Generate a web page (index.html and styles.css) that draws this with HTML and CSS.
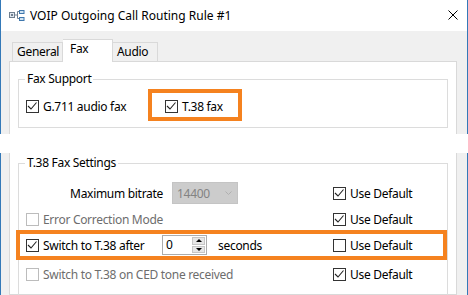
FILE: index.html
```html
<!DOCTYPE html>
<html>
<head>
<meta charset="utf-8">
<title>VOIP Outgoing Call Routing Rule #1</title>
<link rel="stylesheet" href="styles.css">
</head>
<body>
<div class="shot shot-top">
  <div class="titlebar">
    <svg class="app-icon" viewBox="0 0 16 11" width="16" height="11">
      <rect x="0.5" y="2.5" width="5" height="5" fill="#dfe6ee" stroke="#6f7f90"/>
      <rect x="2" y="4" width="2" height="2" fill="#6f7f90"/>
      <path d="M5.5 5H8.5M8.5 1.5V8.5M8.5 1.5H10.5M8.5 8.5H10.5" stroke="#6f7f90" fill="none"/>
      <rect x="10.5" y="0.5" width="4.5" height="3" fill="#cfe3f3" stroke="#3f77ad"/>
      <rect x="10.5" y="7.5" width="4.5" height="3" fill="#cfe3f3" stroke="#3f77ad"/>
    </svg>
    <span class="title">VOIP Outgoing Call Routing Rule #1</span>
    <svg class="close" viewBox="0 0 10 10" width="10" height="10">
      <path d="M0.5 0.5L9.5 9.5M9.5 0.5L0.5 9.5" stroke="#000" stroke-width="1" fill="none"/>
    </svg>
  </div>
  <div class="client">
    <div class="tabs">
      <div class="tab tab-general">General</div>
      <div class="tab tab-fax active">Fax</div>
      <div class="tab tab-audio">Audio</div>
    </div>
    <div class="panel">
      <fieldset class="group group-fax">
        <legend>Fax Support</legend>
        <div class="fax-row">
          <label class="check check-g711"><span class="box"><svg viewBox="0 0 11 11"><path d="M1 5L4 8L9.5 1.5"/></svg></span>G.711 audio fax</label>
          <label class="check"><span class="box"><svg viewBox="0 0 11 11"><path d="M1 5L4 8L9.5 1.5"/></svg></span>T.38 fax</label>
        </div>
      </fieldset>
    </div>
  </div>
  <div class="mark mark-t38"></div>
</div>

<div class="gap"></div>

<div class="shot shot-bottom">
  <div class="client">
    <div class="panel panel-cut">
      <fieldset class="group group-t38">
        <legend>T.38 Fax Settings</legend>
        <div class="settings">
          <div class="cell field">
            <span class="field-label">Maximum bitrate</span>
            <div class="combo"><span>14400</span><svg class="chev" viewBox="0 0 7 4" width="7" height="4"><path d="M0.5 0.5L3.5 3.5L6.5 0.5" stroke="#b0b0b0" fill="none"/></svg></div>
          </div>
          <label class="check"><span class="box"><svg viewBox="0 0 11 11"><path d="M1 5L4 8L9.5 1.5"/></svg></span>Use Default</label>

          <label class="check disabled"><span class="box"></span>Error Correction Mode</label>
          <label class="check"><span class="box"><svg viewBox="0 0 11 11"><path d="M1 5L4 8L9.5 1.5"/></svg></span>Use Default</label>

          <div class="cell field">
            <label class="check check-switch"><span class="box"><svg viewBox="0 0 11 11"><path d="M1 5L4 8L9.5 1.5"/></svg></span>Switch to T.38 after</label>
            <div class="spin">
              <span class="spin-value">0</span>
              <div class="spin-btns">
                <span class="spin-btn"><i class="tri-up"></i></span>
                <span class="spin-btn"><i class="tri-down"></i></span>
              </div>
            </div>
            <span class="unit">seconds</span>
          </div>
          <label class="check"><span class="box"></span>Use Default</label>

          <label class="check disabled"><span class="box"></span>Switch to T.38 on CED tone received</label>
          <label class="check"><span class="box"><svg viewBox="0 0 11 11"><path d="M1 5L4 8L9.5 1.5"/></svg></span>Use Default</label>
        </div>
      </fieldset>
    </div>
  </div>
  <div class="mark mark-switch"></div>
</div>
</body>
</html>
```

FILE: styles.css
```css
* { box-sizing: border-box; }
html, body { margin: 0; padding: 0; }
body {
  width: 468px;
  height: 295px;
  overflow: hidden;
  background: #fff;
  font-family: "Noto Sans", "Segoe UI", sans-serif;
  font-size: 12px;
  color: #000;
}

.shot {
  position: relative;
  overflow: hidden;
  border-left: 1px solid #3479b8;
  border-right: 1px solid #3479b8;
}
.shot-top { height: 134px; }
.shot-bottom { height: 142px; }
.gap { height: 19px; }

/* title bar */
.titlebar {
  height: 31px;
  background: #fff;
  display: flex;
  align-items: center;
  padding-left: 8px;
  padding-bottom: 1px;
}
.app-icon { display: block; margin-right: 5px; }
.title { flex: 1; line-height: 17px; white-space: nowrap; }
.close { display: block; margin-right: 9px; }

/* client area */
.client {
  background: #f0f0f0;
  padding: 8px 10px 0 8px;
  height: calc(100% - 31px);
  letter-spacing: -0.3px;
}
.shot-bottom .client { padding-top: 0; height: 100%; }

.tabs {
  display: flex;
  align-items: flex-end;
  height: 22px;
  padding-left: 3px;
}
.tab {
  height: 19px;
  border: 1px solid #d9d9d9;
  border-bottom: none;
  background: #f0f0f0;
  line-height: 17px;
  white-space: nowrap;
}
.tab + .tab { border-left: none; }
.tab-general { width: 51px; padding-left: 4px; }
.tab-fax { width: 50px; padding-left: 7px; }
.tab-audio { width: 45px; padding-left: 4px; }
.tab.active {
  height: 23px;
  margin-bottom: -1px;
  background: #fff;
  position: relative;
  z-index: 1;
}

.panel {
  background: #fff;
  border: 1px solid #d9d9d9;
  padding: 9px 8px 0 8px;
  height: 100%;
}
.panel-cut { border-top: none; padding-top: 2px; }

/* group boxes */
.group {
  margin: 0;
  min-width: 0;
  border: 1px solid #dcdcdc;
  padding: 0 7px 9px 7px;
}
.group legend {
  padding: 0 2px;
  margin-left: -1px;
  line-height: 16px;
}

.fax-row {
  display: flex;
  align-items: center;
  height: 24px;
  margin-top: 7px;
}
.check-g711 { width: 139px; }

/* checkbox */
.check {
  display: flex;
  align-items: center;
  gap: 4px;
  white-space: nowrap;
  line-height: 17px;
}
.box {
  flex: none;
  width: 13px;
  height: 13px;
  border: 1px solid #333;
  background: #fff;
  display: block;
}
.box svg {
  display: block;
  width: 11px;
  height: 11px;
}
.box svg path {
  fill: none;
  stroke: #222;
  stroke-width: 1.1;
}
.check.disabled { color: #6d6d6d; }
.check.disabled .box { border-color: #bcbcbc; }

/* settings grid */
.settings {
  display: grid;
  grid-template-columns: 307px 1fr;
  grid-template-rows: 26px 26px 26px 32px;
  align-items: center;
  padding-top: 9px;
}
.field { display: flex; align-items: center; }
.field-label { width: 137px; text-align: right; line-height: 17px; }
.combo {
  margin-left: 9px;
  width: 66px;
  height: 22px;
  background: #cccccc;
  border: 1px solid #c4c4c4;
  color: #838383;
  display: flex;
  align-items: center;
  justify-content: space-between;
  padding: 0 5px 0 4px;
}
.chev { display: block; }

.check-switch { width: 136px; }
.spin {
  width: 45px;
  height: 20px;
  border: 1px solid #acacac;
  background: #fff;
  display: flex;
}
.spin-value { flex: 1; padding-left: 3px; line-height: 18px; }
.spin-btns {
  width: 15px;
  display: flex;
  flex-direction: column;
  gap: 1px;
  padding: 1px;
}
.spin-btn {
  flex: 1;
  background: #e6e6e6;
  border: 1px solid #c6c6c6;
  display: flex;
  align-items: center;
  justify-content: center;
}
.tri-up, .tri-down {
  width: 0;
  height: 0;
  border-left: 3px solid transparent;
  border-right: 3px solid transparent;
}
.tri-up { border-bottom: 3px solid #000; }
.tri-down { border-top: 3px solid #000; }
.unit { margin-left: 11px; line-height: 17px; }

/* annotation highlights */
.mark {
  position: absolute;
  border: 4px solid #f5821f;
  pointer-events: none;
}
.mark-t38 { left: 147px; top: 89px; width: 94px; height: 32px; }
.mark-switch { left: 15px; top: 77px; width: 431px; height: 30px; }
```
